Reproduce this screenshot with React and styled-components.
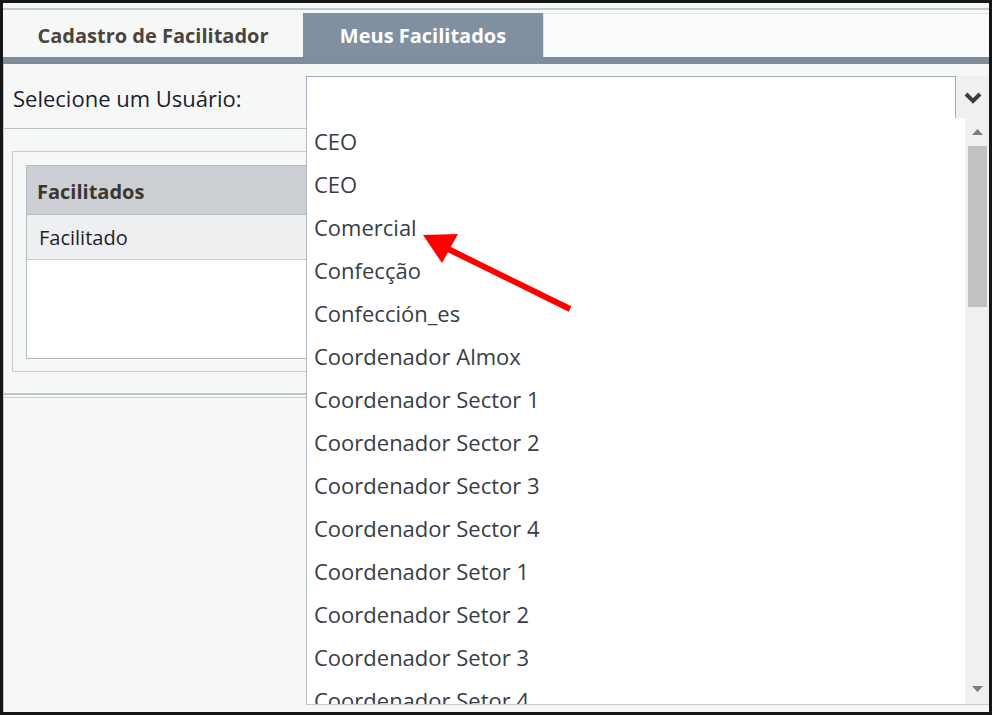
import React from 'react';
import styled, { createGlobalStyle } from 'styled-components';

const GlobalStyle = createGlobalStyle`
  body {
    margin: 0;
    background: #fff;
  }
`;

const usuarios = [
  'CEO',
  'CEO',
  'Comercial',
  'Confecção',
  'Confección_es',
  'Coordenador Almox',
  'Coordenador Sector 1',
  'Coordenador Sector 2',
  'Coordenador Sector 3',
  'Coordenador Sector 4',
  'Coordenador Setor 1',
  'Coordenador Setor 2',
  'Coordenador Setor 3',
  'Coordenador Setor 4',
];

const Frame = styled.div`
  position: relative;
  width: 992px;
  height: 715px;
  box-sizing: border-box;
  border: 3px solid #151515;
  background: #f6f8f8;
  overflow: hidden;
  font-family: 'Open Sans', 'Noto Sans', sans-serif;
  display: flex;
  flex-direction: column;
`;

const TopRule = styled.div`
  height: 5px;
  border-bottom: 2px solid #c2c9d0;
  margin-bottom: 2px;
`;

const TabBar = styled.div`
  display: flex;
  align-items: flex-end;
  height: 45px;
  border-bottom: 7px solid #7f8d9b;
`;

const Tab = styled.div`
  width: ${(p) => p.$width}px;
  height: 44px;
  display: flex;
  align-items: center;
  justify-content: center;
  font-size: 20px;
  font-weight: 700;
  color: ${(p) => (p.$active ? '#ffffff' : '#4b443e')};
  background: ${(p) => (p.$active ? '#8090a0' : 'transparent')};
`;

const TabFill = styled.div`
  flex: 1;
  height: 44px;
  box-sizing: border-box;
  background: #fafbfb;
  border-top: 1px solid #dde2e6;
  border-left: 1px solid #dde2e6;
`;

const Body = styled.div`
  flex: 1;
  border-left: 1px solid #c2c8ce;
  display: flex;
  flex-direction: column;
`;

const FilterRow = styled.div`
  position: relative;
  height: 64px;
  display: flex;
  border-bottom: 1px solid #bcc2c9;
`;

const Label = styled.div`
  width: 302px;
  box-sizing: border-box;
  padding: 19px 0 0 9px;
  font-size: 22px;
  color: #1d1d2c;
`;

const SelectBox = styled.div`
  flex: 1;
  display: flex;
  height: 43px;
  margin-top: 12px;
`;

const SelectInput = styled.div`
  flex: 1;
  box-sizing: border-box;
  background: #fff;
  border: 1px solid #a3adba;
`;

const SelectButton = styled.div`
  width: 33px;
  display: flex;
  align-items: center;
  justify-content: center;
  background: #eff1f1;
  color: #3c3c3c;
`;

const Dropdown = styled.div`
  position: absolute;
  top: 54px;
  left: 302px;
  right: 0;
  height: 587px;
  box-sizing: border-box;
  z-index: 2;
  display: flex;
  background: #fff;
  border-left: 1px solid #b0b8c2;
  border-bottom: 1px solid #c6ccd2;
`;

const OptionList = styled.div`
  flex: 1;
  padding-top: 1px;
  overflow: hidden;
`;

const Option = styled.div`
  height: 43px;
  display: flex;
  align-items: center;
  padding-left: 7px;
  font-size: 22px;
  color: #383d45;
  white-space: nowrap;
`;

const Scrollbar = styled.div`
  width: 24px;
  display: flex;
  flex-direction: column;
  align-items: center;
  background: #f0f0f0;
`;

const ScrollArrow = styled.div`
  height: ${(p) => p.$h}px;
  display: flex;
  align-items: center;
  justify-content: center;
  color: #7d7d7d;
`;

const Thumb = styled.div`
  width: 19px;
  height: 161px;
  background: #c1c1c1;
`;

const Content = styled.div`
  padding: 22px 12px 0 8px;
`;

const Panel = styled.div`
  border: 1px solid #c9cdd2;
  padding: 13px 13px 12px 13px;
`;

const Grid = styled.div`
  border: 1px solid #b3b9c0;
  background: #fff;
  height: 192px;
`;

const GridHeader = styled.div`
  height: 49px;
  display: flex;
  align-items: center;
  padding: 2px 0 0 10px;
  box-sizing: border-box;
  background: #ccd0d4;
  border-bottom: 1px solid #b9bfc5;
  font-size: 20px;
  font-weight: 700;
  color: #3d3632;
`;

const GridRow = styled.div`
  height: 44px;
  display: flex;
  align-items: center;
  padding-left: 12px;
  background: #eeeff0;
  border-bottom: 1px solid #c6cacf;
  font-size: 20px;
  color: #1f1f2a;
`;

const Divider = styled.div`
  margin-top: 21px;
  height: 2px;
  border-top: 2px solid #bfc5cc;
  border-bottom: 1px solid #c9ced3;
`;

const Pointer = styled.svg`
  position: absolute;
  left: 0;
  top: 0;
  pointer-events: none;
  z-index: 3;
`;

const Chevron = () => (
  <svg width="20" height="14" viewBox="0 0 20 14">
    <path d="M3 3 L10 10 L17 3" fill="none" stroke="currentColor" strokeWidth="4" />
  </svg>
);

const Triangle = ({ down }) => (
  <svg width="11" height="6" viewBox="0 0 11 6">
    <path d={down ? 'M0 0 H11 L5.5 6 Z' : 'M0 6 H11 L5.5 0 Z'} fill="currentColor" />
  </svg>
);

const App = () => {
  return (
    <>
      <GlobalStyle />
      <Frame>
        <TopRule />
        <TabBar>
          <Tab $width={300}>Cadastro de Facilitador</Tab>
          <Tab $width={240} $active>
            Meus Facilitados
          </Tab>
          <TabFill />
        </TabBar>
        <Body>
          <FilterRow>
            <Label>Selecione um Usuário:</Label>
            <SelectBox>
              <SelectInput />
              <SelectButton>
                <Chevron />
              </SelectButton>
            </SelectBox>
            <Dropdown>
              <OptionList>
                {usuarios.map((nome, i) => (
                  <Option key={i}>{nome}</Option>
                ))}
              </OptionList>
              <Scrollbar>
                <ScrollArrow $h={28}>
                  <Triangle />
                </ScrollArrow>
                <Thumb />
                <div style={{ flex: 1 }} />
                <ScrollArrow $h={30}>
                  <Triangle down />
                </ScrollArrow>
              </Scrollbar>
            </Dropdown>
          </FilterRow>
          <Content>
            <Panel>
              <Grid>
                <GridHeader>Facilitados</GridHeader>
                <GridRow>Facilitado</GridRow>
              </Grid>
            </Panel>
          </Content>
          <Divider />
        </Body>
        {/* red callout arrow */}
        <Pointer width="986" height="709" viewBox="3 3 986 709">
          <line x1="570" y1="309" x2="446" y2="248" stroke="#ff0000" strokeWidth="6" />
          <polygon points="423,235 458,234 442,263" fill="#ff0000" />
        </Pointer>
      </Frame>
    </>
  );
};

export default App;
